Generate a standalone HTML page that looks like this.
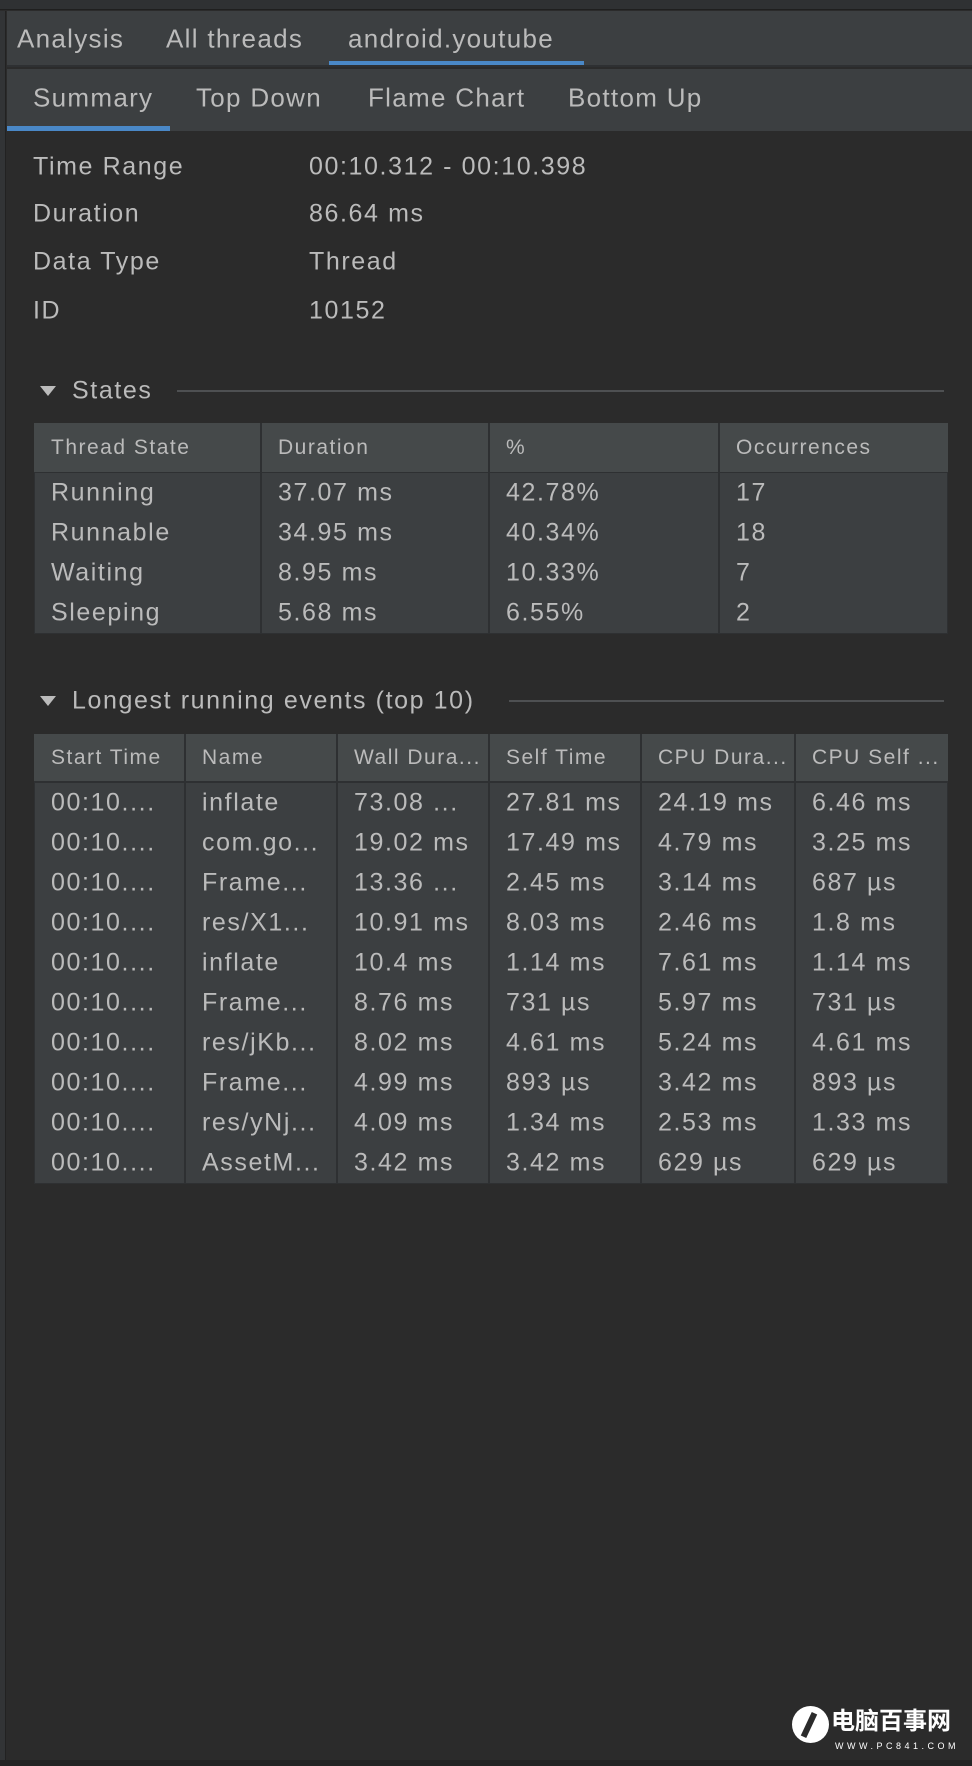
<!DOCTYPE html>
<html><head><meta charset="utf-8"><style>
*{margin:0;padding:0;box-sizing:border-box}
body{width:972px;height:1766px;background:#2b2b2b;font-family:"Liberation Sans",sans-serif;color:#bbbbbb;position:relative;overflow:hidden}
.a{position:absolute;white-space:nowrap}
.t{font-size:25px;letter-spacing:1.6px;transform:translateY(-50%)}
.h{font-size:21px;letter-spacing:1.5px;transform:translateY(-50%)}
.tab{font-size:26px;letter-spacing:1.3px;transform:translateY(-50%)}
</style></head><body>
<div class="a" style="left:0;top:0;width:972px;height:10px;background:#2f3133;border-bottom:1px solid #1f1f1f"></div>
<div class="a" style="left:0;top:11px;width:6px;height:1755px;background:#323436;border-right:1px solid #222"></div>
<div class="a" style="left:7px;top:11px;width:965px;height:56px;background:#3c3f41;border-bottom:2px solid #2e3032"></div>
<div class="a tab" style="left:17px;top:39px">Analysis</div>
<div class="a tab" style="left:166px;top:39px">All threads</div>
<div class="a tab" style="left:348px;top:39px">android.youtube</div>
<div class="a" style="left:329px;top:61px;width:255px;height:4px;background:#4a88c7"></div>
<div class="a" style="left:7px;top:69px;width:965px;height:62px;background:#3c3f41"></div>
<div class="a tab" style="left:33px;top:98px">Summary</div>
<div class="a tab" style="left:196px;top:98px">Top Down</div>
<div class="a tab" style="left:368px;top:98px">Flame Chart</div>
<div class="a tab" style="left:568px;top:98px">Bottom Up</div>
<div class="a" style="left:7px;top:126px;width:163px;height:5px;background:#4a88c7"></div>

<div class="a t" style="left:33px;top:167px">Time Range</div><div class="a t" style="left:309px;top:167px">00:10.312 - 00:10.398</div>
<div class="a t" style="left:33px;top:214px">Duration</div><div class="a t" style="left:309px;top:214px">86.64 ms</div>
<div class="a t" style="left:33px;top:262px">Data Type</div><div class="a t" style="left:309px;top:262px">Thread</div>
<div class="a t" style="left:33px;top:311px">ID</div><div class="a t" style="left:309px;top:311px">10152</div>

<div class="a" style="left:40px;top:386px;width:0;height:0;border-left:8px solid transparent;border-right:8px solid transparent;border-top:10px solid #bbb"></div>
<div class="a t" style="left:72px;top:391px">States</div>
<div class="a" style="left:177px;top:390px;width:767px;height:2px;background:#4e5052"></div>

<div class="a" style="left:34px;top:423px;width:914px;height:211px;background:#3c3f41;border:1px solid #2e3032"></div>
<div class="a" style="left:34px;top:423px;width:914px;height:50px;background:#45494a;border-bottom:1px solid #2e3032"></div>
<div class="a" style="left:260px;top:423px;width:2px;height:211px;background:#2e3032"></div>
<div class="a" style="left:488px;top:423px;width:2px;height:211px;background:#2e3032"></div>
<div class="a" style="left:718px;top:423px;width:2px;height:211px;background:#2e3032"></div>
<div class="a h" style="left:51px;top:448px">Thread State</div><div class="a h" style="left:278px;top:448px">Duration</div><div class="a h" style="left:506px;top:448px">%</div><div class="a h" style="left:736px;top:448px">Occurrences</div>
<div class="a t" style="left:51px;top:493px">Running</div><div class="a t" style="left:278px;top:493px">37.07 ms</div><div class="a t" style="left:506px;top:493px">42.78%</div><div class="a t" style="left:736px;top:493px">17</div>
<div class="a t" style="left:51px;top:533px">Runnable</div><div class="a t" style="left:278px;top:533px">34.95 ms</div><div class="a t" style="left:506px;top:533px">40.34%</div><div class="a t" style="left:736px;top:533px">18</div>
<div class="a t" style="left:51px;top:573px">Waiting</div><div class="a t" style="left:278px;top:573px">8.95 ms</div><div class="a t" style="left:506px;top:573px">10.33%</div><div class="a t" style="left:736px;top:573px">7</div>
<div class="a t" style="left:51px;top:613px">Sleeping</div><div class="a t" style="left:278px;top:613px">5.68 ms</div><div class="a t" style="left:506px;top:613px">6.55%</div><div class="a t" style="left:736px;top:613px">2</div>

<div class="a" style="left:40px;top:696px;width:0;height:0;border-left:8px solid transparent;border-right:8px solid transparent;border-top:10px solid #bbb"></div>
<div class="a t" style="left:72px;top:701px">Longest running events (top 10)</div>
<div class="a" style="left:509px;top:700px;width:435px;height:2px;background:#4e5052"></div>

<div class="a" style="left:34px;top:734px;width:914px;height:450px;background:#3c3f41;border:1px solid #2e3032"></div>
<div class="a" style="left:34px;top:734px;width:914px;height:49px;background:#45494a;border-bottom:2px solid #2e3032"></div>
<div class="a" style="left:184px;top:734px;width:2px;height:450px;background:#2e3032"></div>
<div class="a" style="left:336px;top:734px;width:2px;height:450px;background:#2e3032"></div>
<div class="a" style="left:488px;top:734px;width:2px;height:450px;background:#2e3032"></div>
<div class="a" style="left:640px;top:734px;width:2px;height:450px;background:#2e3032"></div>
<div class="a" style="left:794px;top:734px;width:2px;height:450px;background:#2e3032"></div>
<div class="a h" style="left:51px;top:758px">Start Time</div><div class="a h" style="left:202px;top:758px">Name</div><div class="a h" style="left:354px;top:758px">Wall Dura...</div><div class="a h" style="left:506px;top:758px">Self Time</div><div class="a h" style="left:658px;top:758px">CPU Dura...</div><div class="a h" style="left:812px;top:758px">CPU Self ...</div>

<div class="a t" style="left:51px;top:803px">00:10....</div><div class="a t" style="left:202px;top:803px">inflate</div><div class="a t" style="left:354px;top:803px">73.08 ...</div><div class="a t" style="left:506px;top:803px">27.81 ms</div><div class="a t" style="left:658px;top:803px">24.19 ms</div><div class="a t" style="left:812px;top:803px">6.46 ms</div>
<div class="a t" style="left:51px;top:843px">00:10....</div><div class="a t" style="left:202px;top:843px">com.go...</div><div class="a t" style="left:354px;top:843px">19.02 ms</div><div class="a t" style="left:506px;top:843px">17.49 ms</div><div class="a t" style="left:658px;top:843px">4.79 ms</div><div class="a t" style="left:812px;top:843px">3.25 ms</div>
<div class="a t" style="left:51px;top:883px">00:10....</div><div class="a t" style="left:202px;top:883px">Frame...</div><div class="a t" style="left:354px;top:883px">13.36 ...</div><div class="a t" style="left:506px;top:883px">2.45 ms</div><div class="a t" style="left:658px;top:883px">3.14 ms</div><div class="a t" style="left:812px;top:883px">687 µs</div>
<div class="a t" style="left:51px;top:923px">00:10....</div><div class="a t" style="left:202px;top:923px">res/X1...</div><div class="a t" style="left:354px;top:923px">10.91 ms</div><div class="a t" style="left:506px;top:923px">8.03 ms</div><div class="a t" style="left:658px;top:923px">2.46 ms</div><div class="a t" style="left:812px;top:923px">1.8 ms</div>
<div class="a t" style="left:51px;top:963px">00:10....</div><div class="a t" style="left:202px;top:963px">inflate</div><div class="a t" style="left:354px;top:963px">10.4 ms</div><div class="a t" style="left:506px;top:963px">1.14 ms</div><div class="a t" style="left:658px;top:963px">7.61 ms</div><div class="a t" style="left:812px;top:963px">1.14 ms</div>
<div class="a t" style="left:51px;top:1003px">00:10....</div><div class="a t" style="left:202px;top:1003px">Frame...</div><div class="a t" style="left:354px;top:1003px">8.76 ms</div><div class="a t" style="left:506px;top:1003px">731 µs</div><div class="a t" style="left:658px;top:1003px">5.97 ms</div><div class="a t" style="left:812px;top:1003px">731 µs</div>
<div class="a t" style="left:51px;top:1043px">00:10....</div><div class="a t" style="left:202px;top:1043px">res/jKb...</div><div class="a t" style="left:354px;top:1043px">8.02 ms</div><div class="a t" style="left:506px;top:1043px">4.61 ms</div><div class="a t" style="left:658px;top:1043px">5.24 ms</div><div class="a t" style="left:812px;top:1043px">4.61 ms</div>
<div class="a t" style="left:51px;top:1083px">00:10....</div><div class="a t" style="left:202px;top:1083px">Frame...</div><div class="a t" style="left:354px;top:1083px">4.99 ms</div><div class="a t" style="left:506px;top:1083px">893 µs</div><div class="a t" style="left:658px;top:1083px">3.42 ms</div><div class="a t" style="left:812px;top:1083px">893 µs</div>
<div class="a t" style="left:51px;top:1123px">00:10....</div><div class="a t" style="left:202px;top:1123px">res/yNj...</div><div class="a t" style="left:354px;top:1123px">4.09 ms</div><div class="a t" style="left:506px;top:1123px">1.34 ms</div><div class="a t" style="left:658px;top:1123px">2.53 ms</div><div class="a t" style="left:812px;top:1123px">1.33 ms</div>
<div class="a t" style="left:51px;top:1163px">00:10....</div><div class="a t" style="left:202px;top:1163px">AssetM...</div><div class="a t" style="left:354px;top:1163px">3.42 ms</div><div class="a t" style="left:506px;top:1163px">3.42 ms</div><div class="a t" style="left:658px;top:1163px">629 µs</div><div class="a t" style="left:812px;top:1163px">629 µs</div>

<div class="a" style="left:792px;top:1706px;width:37px;height:37px;border-radius:50%;background:#fff"></div>
<div class="a" style="left:806px;top:1712px;width:6px;height:26px;background:#2b2b2b;transform:rotate(25deg)"></div>
<div class="a" style="left:831px;top:1707px;font-size:24px;font-weight:bold;color:#fff;font-family:'Liberation Sans','Noto Sans CJK SC',sans-serif;line-height:30px">电脑百事网</div>
<div class="a" style="left:835px;top:1741px;font-size:9px;color:#fff;letter-spacing:3.5px">WWW.PC841.COM</div>
<div class="a" style="left:0;top:1760px;width:972px;height:6px;background:#222"></div>
</body></html>
